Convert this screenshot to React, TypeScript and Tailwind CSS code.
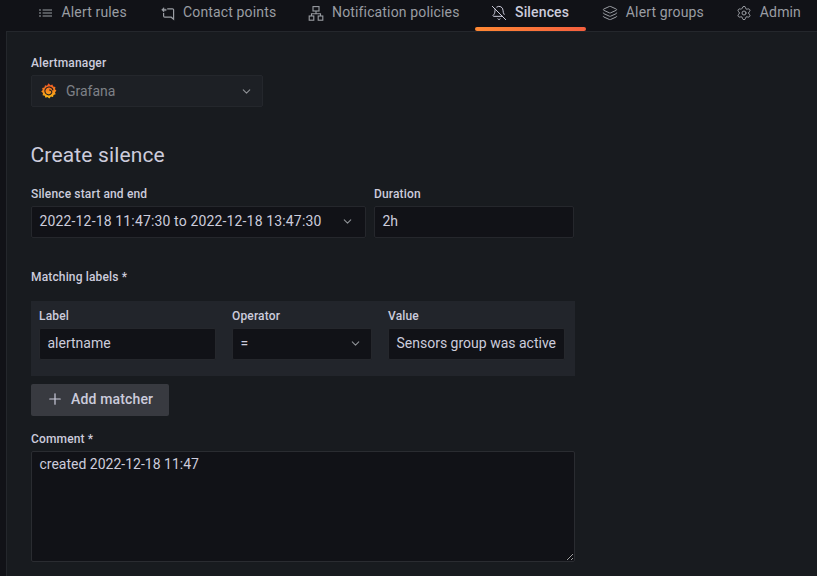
import { BellOff, ChevronDown, Layers, Plus, Settings } from "lucide-react";
import type { ReactNode } from "react";

const ListIcon = () => (
  <svg width="16" height="16" viewBox="0 0 16 16" stroke="currentColor" strokeWidth="1.1" className="shrink-0">
    <path d="M1 5h2M1 8h2M1 11h2" />
    <path d="M4.6 5H14M4.6 8H14M4.6 11H14" />
  </svg>
);

const ContactIcon = () => (
  <svg width="16" height="16" viewBox="0 0 16 16" fill="none" stroke="currentColor" strokeWidth="1.2" className="shrink-0">
    <path d="M7.2 3.8h5.2a1.2 1.2 0 0 1 1.2 1.2v9.2l-2.4-2H4.8a1.2 1.2 0 0 1-1.2-1.2V8" />
    <path d="M1.6 4.8 4 2.6v1.6h2.2v1.4H4v1.6z" fill="currentColor" strokeWidth="0.4" />
  </svg>
);

const SitemapIcon = () => (
  <svg width="16" height="16" viewBox="0 0 16 16" fill="none" stroke="currentColor" strokeWidth="1.1" className="shrink-0">
    <rect x="5" y="1.6" width="6" height="4.4" />
    <rect x="1.2" y="11" width="4.6" height="4.2" />
    <rect x="10.2" y="11" width="4.6" height="4.2" />
    <path d="M8 6v2.8M3.5 11V8.8h9V11" />
  </svg>
);

const GrafanaLogo = () => (
  <svg width="16" height="16" viewBox="0 0 16 16" className="ml-px shrink-0">
    <defs>
      <linearGradient id="gf" x1="0" y1="1" x2="0" y2="0">
        <stop offset="0" stopColor="#fcc015" />
        <stop offset="1" stopColor="#f05025" />
      </linearGradient>
    </defs>
    <path
      fill="url(#gf)"
      d="M7.6.2 9.4 2.2 11.4 1.4 12.2 3.6 14.4 4 14 6.2 15.4 7.8 14 9.2 14.6 11.3 12.5 11.9 12 14 9.9 13.5 8.3 15.6 6.5 14 4.5 14.8 3.8 12.7 1.6 12.2 2 10 .2 8.6 1.7 7 1.2 5 3.4 4.4 4 2.2 6 2.8z"
    />
    <path
      fill="none"
      stroke="#1b1d22"
      strokeWidth="1.1"
      d="M12 7.4A4.1 4.1 0 0 0 4.3 6.2 3.9 3.9 0 0 0 6.4 11.6 3.2 3.2 0 0 0 10.8 9.4 2.2 2.2 0 0 0 8.2 7.1"
    />
  </svg>
);

function Tab({
  icon,
  label,
  active,
  className,
  textClass = "",
}: {
  icon: ReactNode;
  label: string;
  active?: boolean;
  className: string;
  textClass?: string;
}) {
  return (
    <div
      className={`relative flex h-[31px] items-start gap-2 px-4 pt-[4px] text-[14px] leading-[17px] ${className} ${
        active ? "font-medium text-[#ccccdc]" : "text-[#9a9da3]"
      }`}
    >
      <span className="flex h-[17px] w-4 shrink-0 items-center justify-center">{icon}</span>
      <span className={`whitespace-nowrap ${textClass}`}>{label}</span>
      {active && (
        <span className="absolute right-0 bottom-0 left-0 h-[4px] rounded-[2px] bg-gradient-to-r from-[#ff8833] to-[#f55f3e]" />
      )}
    </div>
  );
}

const Label = ({ children }: { children: ReactNode }) => (
  <div className="mb-[4px] h-[15px] text-[12px] leading-[15px] font-medium text-[#ccccdc]">{children}</div>
);

const inputBox =
  "flex h-[32px] items-center rounded-[2px] border border-[#25272c] bg-[#111217] pr-2 pb-[2px] pl-[7.5px] text-[14px] text-[#ccccdc]";

export default function App() {
  return (
    <div
      className="h-[576px] w-[817px] overflow-hidden bg-[#111217] tracking-[0.15px]"
      style={{ fontFamily: "Roboto, 'Liberation Sans', sans-serif" }}
    >
      <div className="flex h-[31px] pl-[22px]">
        <Tab className="mr-[2px] w-[120px]" icon={<ListIcon />} label="Alert rules" textClass="-ml-[0.5px]" />
        <Tab className="mr-[1px] w-[147px]" icon={<ContactIcon />} label="Contact points" textClass="-ml-px" />
        <Tab className="w-[183px]" icon={<SitemapIcon />} label="Notification policies" />
        <Tab className="w-[112px]" icon={<BellOff size={16} strokeWidth={1.5} />} label="Silences" active />
        <Tab className="mr-[2px] w-[132px]" icon={<Layers size={16} strokeWidth={1.5} />} label="Alert groups" textClass="-ml-[0.5px]" />
        <Tab className="" icon={<Settings size={16} strokeWidth={1.5} />} label="Admin" textClass="-ml-[0.5px]" />
      </div>

      <div className="ml-[6px] h-[545px] border-t border-l border-[#24272c] bg-[#181b1f] pt-[24px] pl-[24px]">
        <Label>Alertmanager</Label>
        <div className="flex h-[32px] w-[232px] items-center rounded-[2px] border border-[#24272c] bg-[#1d2025] px-2 text-[14px] tracking-normal text-[#7e8187]">
          <GrafanaLogo />
          <span className="ml-[9px] flex-1">Grafana</span>
          <ChevronDown size={13} strokeWidth={2} className="mr-[1px] text-[#8e9196]" />
        </div>

        <h2 className="mt-[34px] -ml-[0.5px] h-[28px] text-[21px] leading-[28px] font-normal text-[#ccccdc]">
          Create silence
        </h2>

        <div className="mt-[18px] flex gap-2">
          <div>
            <Label>Silence start and end</Label>
            <div className={`${inputBox} w-[335px] justify-between`}>
              <span className="whitespace-nowrap">2022-12-18 11:47:30 to 2022-12-18 13:47:30</span>
              <ChevronDown size={13} strokeWidth={2} className="mr-[3px] text-[#8e9196]" />
            </div>
          </div>
          <div>
            <Label>Duration</Label>
            <div className={`${inputBox} w-[200px] tracking-normal`}>2h</div>
          </div>
        </div>

        <div className="mt-[32px]">
          <Label>Matching labels *</Label>
        </div>

        <div className="mt-[16px] flex h-[75px] w-[544px] gap-4 bg-[#22252b] px-2 pt-[8px]">
          <div>
            <Label>Label</Label>
            <div className={`${inputBox} w-[177px] tracking-normal`}>alertname</div>
          </div>
          <div>
            <Label>Operator</Label>
            <div className={`${inputBox} w-[140px] justify-between tracking-normal`}>
              <span>=</span>
              <ChevronDown size={13} strokeWidth={2} className="mr-[1px] text-[#8e9196]" />
            </div>
          </div>
          <div>
            <Label>Value</Label>
            <div className={`${inputBox} w-[177px] tracking-normal whitespace-nowrap`}>Sensors group was active</div>
          </div>
        </div>

        <div className="mt-[8px] flex h-[32px] w-[138px] items-center rounded-[2px] bg-[#383a40] pb-[2px] pl-[15px] text-[14px] font-medium text-[#ccccdc]">
          <Plus size={18} strokeWidth={1.6} />
          <span className="ml-[7px]">Add matcher</span>
        </div>

        <div className="mt-[16px]">
          <Label>Comment *</Label>
        </div>
        <textarea
          readOnly
          value="created 2022-12-18 11:47"
          className="block h-[111px] w-[544px] rounded-[2px] border border-[#2a2c31] bg-[#111217] py-[2px] pr-2 pl-[7.5px] text-[14px] leading-[20px] tracking-normal text-[#ccccdc] outline-none"
        />
      </div>
    </div>
  );
}
